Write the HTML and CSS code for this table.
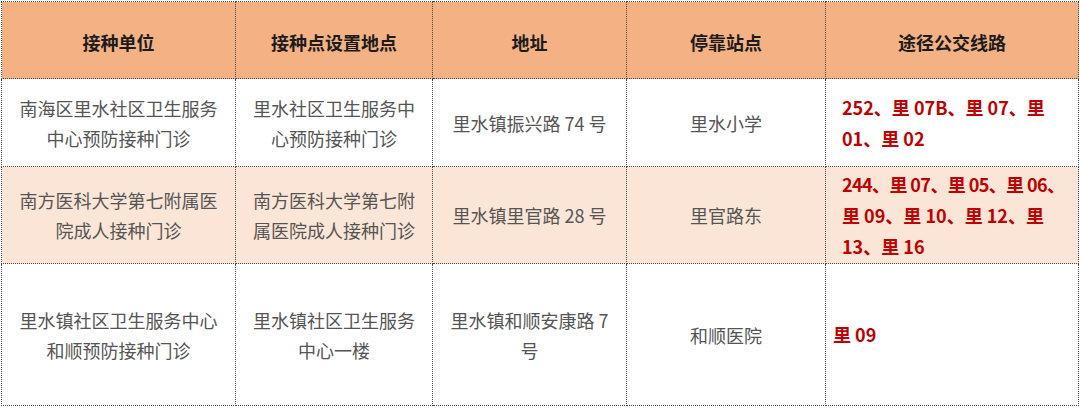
FILE: index.html
```html
<!DOCTYPE html>
<html lang="zh-CN">
<head>
<meta charset="utf-8">
<link rel="stylesheet" href="styles.css">
</head>
<body>
<table class="grid">
  <colgroup>
    <col class="c1"><col class="c2"><col class="c3"><col class="c4"><col class="c5">
  </colgroup>
  <thead>
    <tr class="head">
      <th>接种单位</th>
      <th>接种点设置地点</th>
      <th>地址</th>
      <th>停靠站点</th>
      <th>途径公交线路</th>
    </tr>
  </thead>
  <tbody>
    <tr class="r1">
      <td>南海区里水社区卫生服务中心预防接种门诊</td>
      <td>里水社区卫生服务中心预防接种门诊</td>
      <td>里水镇振兴路 74 号</td>
      <td>里水小学</td>
      <td class="bus"><span class="line">252、里 07B、里 07、里</span><span class="line">01、里 02</span></td>
    </tr>
    <tr class="r2">
      <td>南方医科大学第七附属医院成人接种门诊</td>
      <td>南方医科大学第七附属医院成人接种门诊</td>
      <td>里水镇里官路 28 号</td>
      <td>里官路东</td>
      <td class="bus"><span class="line tight">244、里 07、里 05、里 06、</span><span class="line">里 09、里 10、里 12、里</span><span class="line">13、里 16</span></td>
    </tr>
    <tr class="r3">
      <td>里水镇社区卫生服务中心和顺预防接种门诊</td>
      <td>里水镇社区卫生服务中心一楼</td>
      <td>里水镇和顺安康路 7 号</td>
      <td>和顺医院</td>
      <td class="bus bus-tight">里 09</td>
    </tr>
  </tbody>
</table>
</body>
</html>
```
FILE: styles.css
```css
html, body {
  margin: 0;
  padding: 0;
  background: #ffffff;
}
body {
  padding: 1px 0 0 1px;
  font-family: "Microsoft YaHei", "Noto Sans CJK SC", "Noto Sans", sans-serif;
}
.grid {
  border-collapse: collapse;
  table-layout: fixed;
  width: 1077px;
}
.c1 { width: 234px; }
.c2 { width: 197px; }
.c3 { width: 194px; }
.c4 { width: 199px; }
.c5 { width: 253px; }
.grid th,
.grid td {
  border: 1px dotted #4a4a4a;
  padding: 0 16px;
  text-align: center;
  vertical-align: middle;
  font-size: 18px;
  line-height: 30px;
  color: #555555;
}
.grid th {
  background: #f4b183;
  color: #1c1c1c;
  font-weight: 700;
  height: 72px;
  padding-top: 4px;
}
.r1 td { height: 87px; }
.r2 td { height: 96px; background: #fbe5d6; }
.r3 td { height: 141px; }
.grid td.bus {
  text-align: left;
  color: #c00000;
  font-weight: 700;
  line-height: 31px;
}
.line {
  display: block;
  white-space: nowrap;
}
.tight {
  letter-spacing: -0.6px;
}
.grid td.bus-tight {
  padding-left: 7px;
}
```
